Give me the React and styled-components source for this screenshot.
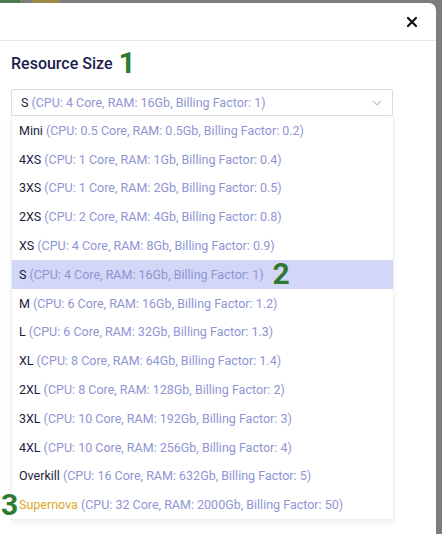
import styled, { createGlobalStyle } from "styled-components";

const GlobalStyle = createGlobalStyle`
  html, body {
    margin: 0;
    padding: 0;
    background: #7d7d7d;
    font-family: Roboto, "Liberation Sans", sans-serif;
  }
`;

const Backdrop = styled.div`
  width: 442px;
  height: 534px;
  background: #7d7d7d;
  overflow: hidden;
  display: flex;
  flex-direction: column;
`;

const TopStrip = styled.div`
  height: 3px;
  display: flex;
  gap: 12px;
  flex-shrink: 0;
`;

const Blob = styled.span`
  width: ${(p) => p.$w}px;
  background: ${(p) => p.$c};
`;

const Modal = styled.div`
  flex: 1;
  width: 436px;
  background: #fff;
  border-top-right-radius: 7px;
  display: flex;
  flex-direction: column;
`;

const Header = styled.div`
  height: 37px;
  border-bottom: 1px solid #e8e8e8;
  display: flex;
  align-items: center;
  justify-content: flex-end;
  padding-right: 18px;
  flex-shrink: 0;
`;

const Close = styled.button`
  border: none;
  background: none;
  padding: 0;
  width: 12px;
  height: 12px;
  display: flex;
  cursor: pointer;
`;

const Body = styled.div`
  padding: 7px 0 0 11px;
`;

const Title = styled.h3`
  margin: 0;
  height: 30px;
  display: flex;
  align-items: center;
  font-size: 16px;
  font-weight: 500;
  color: #1b1d4d;
`;

const Mark = styled.span`
  color: #2f7a32;
  font-family: Roboto, "Liberation Sans", sans-serif;
  font-weight: 700;
  font-size: 30px;
  line-height: 1;
  margin-left: ${(p) => p.$ml || 0}px;
`;

const Field = styled.div`
  margin-top: 11px;
  width: 382px;
`;

const Select = styled.div`
  height: 27px;
  box-sizing: border-box;
  border: 1px solid #dedede;
  border-radius: 2px;
  display: flex;
  align-items: center;
  padding: 0 10px 0 9px;
  font-size: 12.5px;
  justify-content: space-between;
`;

const Menu = styled.ul`
  list-style: none;
  margin: 0;
  padding: 0;
  width: 381px;
  background: #fff;
  border: 1px solid #eeeeee;
  border-top: none;
  box-shadow: 0 3px 6px rgba(0, 0, 0, 0.06);
`;

const Item = styled.li`
  height: 28.8px;
  display: flex;
  align-items: center;
  padding-left: 7px;
  font-size: 12.5px;
  background: ${(p) => (p.$active ? "#d3d7f7" : "transparent")};
  position: relative;
`;

const Name = styled.span`
  color: ${(p) => p.$color || "#1b1d3d"};
`;

const Desc = styled.span`
  color: #8f95d3;
  margin-left: 3px;
`;

const SideMark = styled(Mark)`
  position: absolute;
  left: -11px;
  top: 0px;
`;

const sizes = [
  ["Mini", "0.5", "0.5Gb", "0.2"],
  ["4XS", "1", "1Gb", "0.4"],
  ["3XS", "1", "2Gb", "0.5"],
  ["2XS", "2", "4Gb", "0.8"],
  ["XS", "4", "8Gb", "0.9"],
  ["S", "4", "16Gb", "1"],
  ["M", "6", "16Gb", "1.2"],
  ["L", "6", "32Gb", "1.3"],
  ["XL", "8", "64Gb", "1.4"],
  ["2XL", "8", "128Gb", "2"],
  ["3XL", "10", "192Gb", "3"],
  ["4XL", "10", "256Gb", "4"],
  ["Overkill", "16", "632Gb", "5"],
  ["Supernova", "32", "2000Gb", "50"],
];

const desc = (s) => `(CPU: ${s[1]} Core, RAM: ${s[2]}, Billing Factor: ${s[3]})`;

export default function App() {
  return (
    <Backdrop>
      <GlobalStyle />
      <TopStrip>
        <Blob $w={20} $c="#4b7a4e" />
        <Blob $w={28} $c="#9c8a4a" />
      </TopStrip>
      <Modal>
        <Header>
          <Close aria-label="close">
            <svg width="12" height="12" viewBox="0 0 12 12">
              <path d="M2 2L10 10M10 2L2 10" stroke="#111" strokeWidth="2.2" strokeLinecap="round" />
            </svg>
          </Close>
        </Header>
        <Body>
          <Title>
            Resource Size <Mark $ml={6}>1</Mark>
          </Title>
          <Field>
            <Select>
              <span>
                <Name>S</Name>
                <Desc>{desc(sizes[5])}</Desc>
              </span>
              <svg width="10" height="6" viewBox="0 0 10 6">
                <path d="M1 1l4 4 4-4" fill="none" stroke="#c4c4c4" strokeWidth="1.2" />
              </svg>
            </Select>
            <Menu>
              {sizes.map((s) => (
                <Item key={s[0]} $active={s[0] === "S"}>
                  {s[0] === "Supernova" && <SideMark>3</SideMark>}
                  <Name $color={s[0] === "Supernova" ? "#d9a92a" : undefined}>{s[0]}</Name>
                  <Desc>{desc(s)}</Desc>
                  {s[0] === "S" && <Mark $ml={9}>2</Mark>}
                </Item>
              ))}
            </Menu>
          </Field>
        </Body>
      </Modal>
    </Backdrop>
  );
}
